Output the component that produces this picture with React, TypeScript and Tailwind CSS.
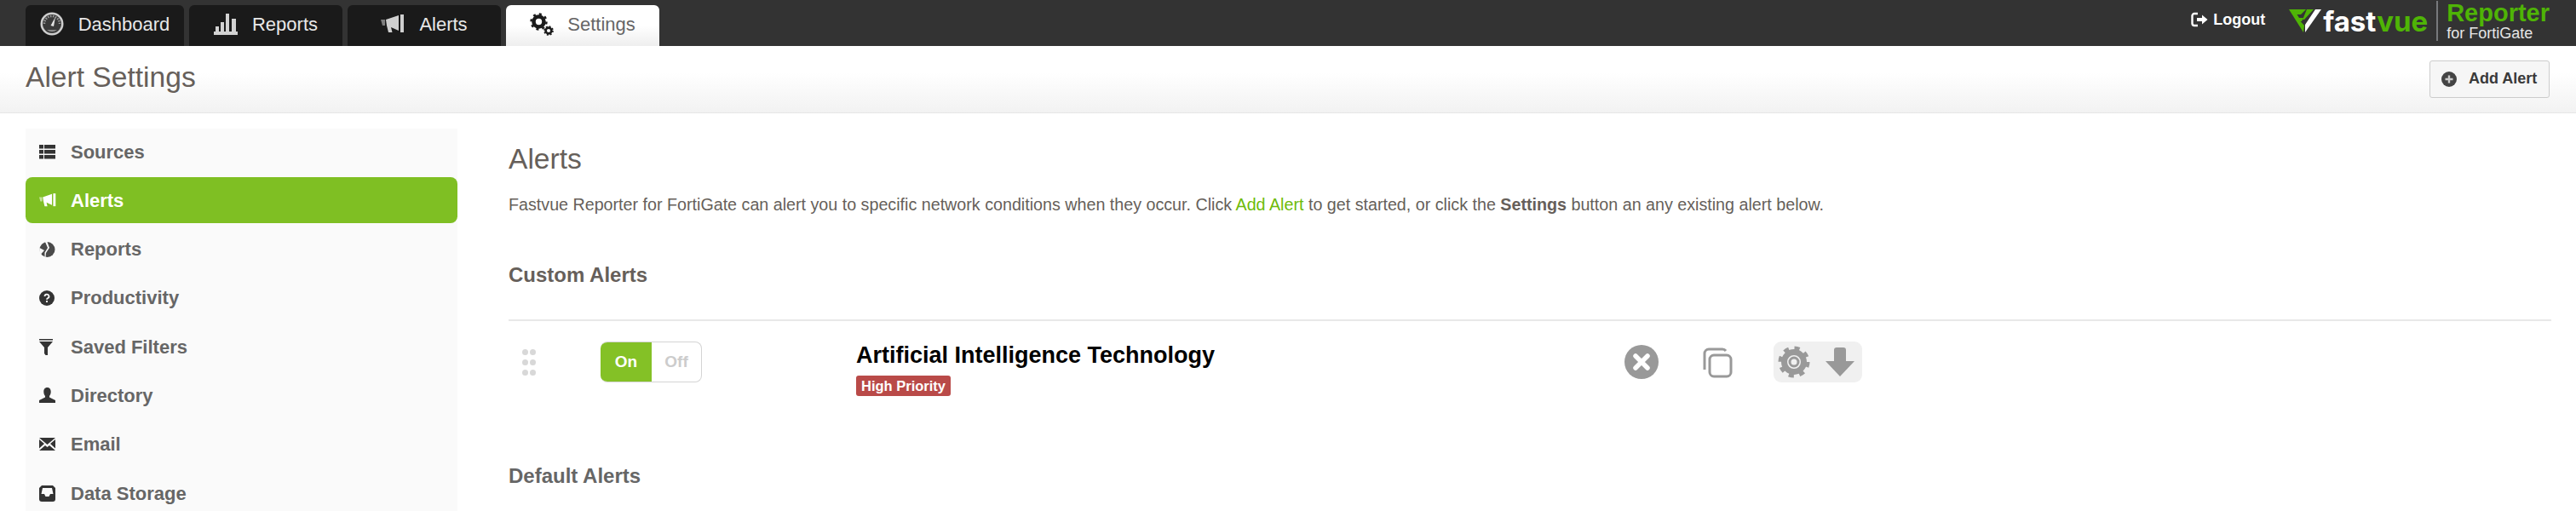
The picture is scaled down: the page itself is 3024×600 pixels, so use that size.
import React from "react";

const Gauge = () => (
  <svg width="28" height="28" viewBox="0 0 28 28">
    <circle cx="14" cy="14" r="13.5" fill="#cfcfcf" />
    <circle cx="14" cy="14" r="11" fill="#3a3a3a" />
    <path d="M5 14a9 9 0 0 1 18 0" fill="none" stroke="#9a9a9a" strokeWidth="2.500" strokeDasharray="1.500 1.500" />
    <path d="M18 6 L16 17 L12.500 16Z" fill="#e4e4e4" />
    <path d="M8 21a9 9 0 0 0 12 0z" fill="#8a8a8a" />
  </svg>
);
const Bars = () => (
  <svg width="28" height="25" viewBox="0 0 28 25" fill="#d2d2d2">
    <rect x="2" y="15" width="4" height="7" />
    <rect x="8" y="10" width="4" height="12" />
    <rect x="14" y="0" width="4" height="22" />
    <rect x="21" y="6" width="5" height="16" />
    <rect x="0" y="21" width="28" height="4" />
  </svg>
);
const Horn = ({ c = "#cfcfcf", w = 28, h = 22 }: { c?: string; w?: number; h?: number }) => (
  <svg width={w} height={h} viewBox="0 0 28 22" fill={c}>
    <path d="M0 6h5v7H2z" opacity="0.55" />
    <path d="M6 6 L21 1v18L12 15l1.500 6H9L7 13z" />
    <rect x="23" y="0" width="4" height="21" />
  </svg>
);
const Gears = () => (
  <svg width="28" height="27" viewBox="0 0 28 27" fill="none" stroke="#1a1a1a">
    <circle cx="10.500" cy="10.500" r="6" strokeWidth="4.600" />
    <circle cx="10.500" cy="10.500" r="9" strokeWidth="2.400" strokeDasharray="3 4.070" />
    <circle cx="22" cy="21" r="3.400" strokeWidth="2.600" />
    <circle cx="22" cy="21" r="5" strokeWidth="1.600" strokeDasharray="2 1.930" />
  </svg>
);
const LogoutIcon = () => (
  <svg width="20" height="18" viewBox="0 0 20 18" fill="none">
    <path d="M8 2H4a2.500 2.500 0 0 0-2.500 2.500v9A2.500 2.500 0 0 0 4 16h4" stroke="#fff" strokeWidth="2.400" />
    <path d="M7 7h6V3.500L19.500 9 13 14.500V11H7z" fill="#fff" />
  </svg>
);
const Mark = () => (
  <svg width="38" height="27" viewBox="0 0 38 27">
    <path d="M0 0H20L14 6H9.500L12 10H17L15 14H13.500L18 19L17 27Z" fill="#4fb406" />
    <path d="M38 0H31L19 18L19 27Z" fill="#fff" />
    <path d="M21 0H29L18 12H16Z" fill="#4fb406" />
  </svg>
);
const PlusCircle = () => (
  <svg width="18" height="18" viewBox="0 0 18 18">
    <circle cx="9" cy="9" r="9" fill="#444" />
    <path d="M9 4.500v9M4.500 9h9" stroke="#ccc" strokeWidth="2.400" />
  </svg>
);

const ic = "#333";
const icons: Record<string, React.ReactNode> = {
  Sources: (
    <svg width="19" height="17" viewBox="0 0 19 17" fill={ic}>
      <rect x="0" y="0" width="5" height="4.500" />
      <rect x="6" y="0" width="13" height="4.500" />
      <rect x="0" y="6" width="5" height="4.500" />
      <rect x="6" y="6" width="13" height="4.500" />
      <rect x="0" y="12" width="5" height="4.500" />
      <rect x="6" y="12" width="13" height="4.500" />
    </svg>
  ),
  Alerts: <Horn c="#fff" w={20} h={16} />,
  Reports: (
    <svg width="19" height="18" viewBox="0 0 19 18">
      <circle cx="9.500" cy="9" r="9" fill="#4a4a4a" />
      <path d="M0.500 7 L6 10 L2 14.500 A9 9 0 0 1 0.500 7Z" fill="#fafafa" />
      <path d="M7 0 L9.500 0 L12 7 L8 13 L7.500 18 L6.500 18 L6.500 12.500 L10 7Z" fill="#fafafa" />
    </svg>
  ),
  Productivity: (
    <svg width="18" height="18" viewBox="0 0 18 18">
      <circle cx="9" cy="9" r="9" fill={ic} />
      <path d="M6.500 7a2.500 2.300 0 1 1 3.700 2c-.9.500-1.200 1-1.200 1.800" fill="none" stroke="#fafafa" strokeWidth="1.800" />
      <rect x="8" y="12" width="2" height="2" fill="#fafafa" />
    </svg>
  ),
  "Saved Filters": (
    <svg width="16" height="19" viewBox="0 0 16 19" fill={ic}>
      <rect x="0" y="0" width="16" height="1.500" />
      <path d="M0 3h16L10 10v9H7.500L6 17v-7z" />
    </svg>
  ),
  Directory: (
    <svg width="19" height="18" viewBox="0 0 19 18" fill={ic}>
      <path d="M9.500 0c3 0 4.200 2.300 4.200 5 0 2-.8 4-1.700 5v1.500L19 15v3H0v-3l7-3.500V10C6.100 9 5.300 7 5.300 5c0-2.700 1.200-5 4.200-5z" />
    </svg>
  ),
  Email: (
    <svg width="19" height="15" viewBox="0 0 19 15" fill={ic}>
      <path d="M0 0h19L9.500 8z" />
      <path d="M0 2l6 5-6 5.500zM19 2l-6 5 6 5.500z" />
      <path d="M0 15l7-6 2.500 2 2.500-2 7 6z" />
    </svg>
  ),
  "Data Storage": (
    <svg width="19" height="19" viewBox="0 0 19 19">
      <path d="M3 0h13l3 3v13a3 3 0 0 1-3 3H3a3 3 0 0 1-3-3V3z" fill={ic} />
      <path d="M4 3h11l1.500 7H13l-1.500 3h-4L6 10H2.500z" fill="#fafafa" />
    </svg>
  ),
};

const nav = ["Sources", "Alerts", "Reports", "Productivity", "Saved Filters", "Directory", "Email", "Data Storage"];

const tabs: { label: string; icon: React.ReactNode; w: string }[] = [
  { label: "Dashboard", icon: <Gauge />, w: "w-[186px]" },
  { label: "Reports", icon: <Bars />, w: "w-[180px]" },
  { label: "Alerts", icon: <Horn />, w: "w-[180px]" },
];

export default function App() {
  return (
    <div className="h-[600px] overflow-hidden bg-white font-['Liberation_Sans',Arial,sans-serif]">
      <header className="h-[54px] bg-[#333333] flex items-end pl-[30px] pr-[31px]">
        <nav className="flex gap-[6px]">
          {tabs.map((t) => (
            <div
              key={t.label}
              className={`${t.w} h-[48px] bg-[#1a1a1a] rounded-t-[6px] flex items-center justify-center gap-[17px] text-[22px] text-[#e8e8e8] pb-[4px]`}
            >
              {t.icon}
              <span>{t.label}</span>
            </div>
          ))}
          <div className="w-[180px] h-[48px] rounded-t-[6px] bg-gradient-to-b from-white from-50% to-[#eeeeee] flex items-center justify-center gap-[16px] text-[22px] text-[#666666] pb-[4px]">
            <Gears />
            <span>Settings</span>
          </div>
        </nav>
        <div className="ml-auto h-[54px] flex items-center">
          <div className="flex items-center gap-[6px] text-white font-bold text-[18px] mb-[8px]">
            <LogoutIcon />
            <span>Logout</span>
          </div>
          <div className="ml-[28px] flex items-center gap-[2px] mb-[5px]">
            <Mark />
            <span className="font-['Inter',sans-serif] font-bold text-[33px] leading-[30px] text-white">
              fast<span className="text-[#4fb406]">vue</span>
            </span>
          </div>
          <div className="ml-[10px] w-[2px] h-[47px] mb-[5px] bg-[#77797c]" />
          <div className="ml-[10px] flex flex-col mb-[5px]">
            <span className="text-[29px] leading-[28px] font-bold text-[#4fb406]">Reporter</span>
            <span className="text-[18px] leading-[20px] text-[#e6e6e6]">for FortiGate</span>
          </div>
        </div>
      </header>

      <div className="h-[79px] bg-gradient-to-b from-white from-40% to-[#f2f2f2] border-b border-[#e6e6e6] flex items-center pl-[30px] pr-[31px]">
        <h1 className="text-[33.6px] text-[#665f5a] pb-[4px]">Alert Settings</h1>
        <button className="ml-auto w-[141px] h-[44px] mt-[-1px] flex items-center gap-[14px] pl-[13px] bg-[#f6f6f6] border border-[#cccccc] rounded-[3px] text-[18px] font-bold text-[#3a3a3a]">
          <PlusCircle />
          <span>Add Alert</span>
        </button>
      </div>

      <div className="flex pl-[30px] pr-[29px]">
        <aside className="w-[507px] h-[470px] mt-[18px] bg-[#fafafa] shrink-0">
          {nav.map((n) => (
            <div
              key={n}
              className={`h-[54px] mb-[3.300px] flex items-center rounded-[8px] pl-[16px] text-[22px] font-bold ${
                n === "Alerts" ? "bg-[#7fbf23] text-white" : "text-[#666666]"
              }`}
            >
              <span className="w-[37px] shrink-0 flex">{icons[n]}</span>
              <span>{n}</span>
            </div>
          ))}
        </aside>

        <main className="flex-1 ml-[60px] text-[#665f5a]">
          <h2 className="mt-[34px] text-[33.6px] leading-[40px]">Alerts</h2>
          <p className="mt-[19px] text-[19.700px] leading-[28px]">
            Fastvue Reporter for FortiGate can alert you to specific network conditions when they occur. Click{" "}
            <span className="text-[#6ebb0a]">Add Alert</span> to get started, or click the <b>Settings</b> button an any existing alert below.
          </p>
          <h3 className="mt-[55px] text-[24px] leading-[28px] font-bold">Custom Alerts</h3>
          <div className="mt-[38px] border-t-2 border-[#e8e8e8] h-[139px] flex items-start pt-[24px]">
            <div className="ml-[16px] w-[16px] mt-[9px] grid grid-cols-2 gap-x-[2px] gap-y-[5px]">
              {[0, 1, 2, 3, 4, 5].map((i) => (
                <span key={i} className="w-[7px] h-[7px] rounded-full bg-[#d8d8d8]" />
              ))}
            </div>
            <div className="ml-[76px] w-[119px] h-[48px] flex rounded-[8px] overflow-hidden border border-[#d4d4d4] border-l-0 text-[19px] font-bold">
              <span className="w-[60px] bg-[#84c126] text-white flex items-center justify-center">On</span>
              <span className="flex-1 text-[#cccccc] flex items-center justify-center">Off</span>
            </div>
            <div className="ml-[181px] w-[902px] shrink-0">
              <div className="text-[27px] leading-[32px] font-bold text-black">Artificial Intelligence Technology</div>
              <span className="mt-[8px] w-[111px] h-[24px] rounded-[3px] bg-[#b94a48] text-white text-[16.500px] font-bold flex items-center justify-center">
                High Priority
              </span>
            </div>
            <svg className="mt-[4px] shrink-0" width="40" height="40" viewBox="0 0 40 40">
              <circle cx="20" cy="20" r="20" fill="#999999" />
              <path d="M13 13l14 14M27 13L13 27" stroke="#fff" strokeWidth="5.500" strokeLinecap="round" />
            </svg>
            <svg className="ml-[51px] mt-[7px] shrink-0" width="36" height="36" viewBox="0 0 36 36" fill="none" stroke="#999999" strokeWidth="3">
              <path d="M3 26V7a5 5 0 0 1 5-5h16a5 5 0 0 1 4 2" />
              <rect x="9" y="9" width="25" height="25" rx="5" />
            </svg>
            <div className="ml-[48px] w-[104px] h-[48px] bg-[#f0f0f0] rounded-[9px] flex items-center pl-[5px] gap-[18px] shrink-0">
              <svg width="38" height="38" viewBox="0 0 38 38">
                <circle cx="19" cy="19" r="11.500" fill="none" stroke="#999999" strokeWidth="7" />
                <circle cx="19" cy="19" r="16" fill="none" stroke="#999999" strokeWidth="5" strokeDasharray="6 6.570" />
                <circle cx="19" cy="19" r="5" fill="none" stroke="#999999" strokeWidth="3" />
              </svg>
              <svg width="34" height="34" viewBox="0 0 34 34" fill="#999999">
                <path d="M10 3a3 3 0 0 1 3-3h8a3 3 0 0 1 3 3v13h10L17 34 0 16h10z" />
              </svg>
            </div>
          </div>
          <h3 className="mt-[31px] text-[24px] leading-[28px] font-bold text-[#666666]">Default Alerts</h3>
        </main>
      </div>
    </div>
  );
}
